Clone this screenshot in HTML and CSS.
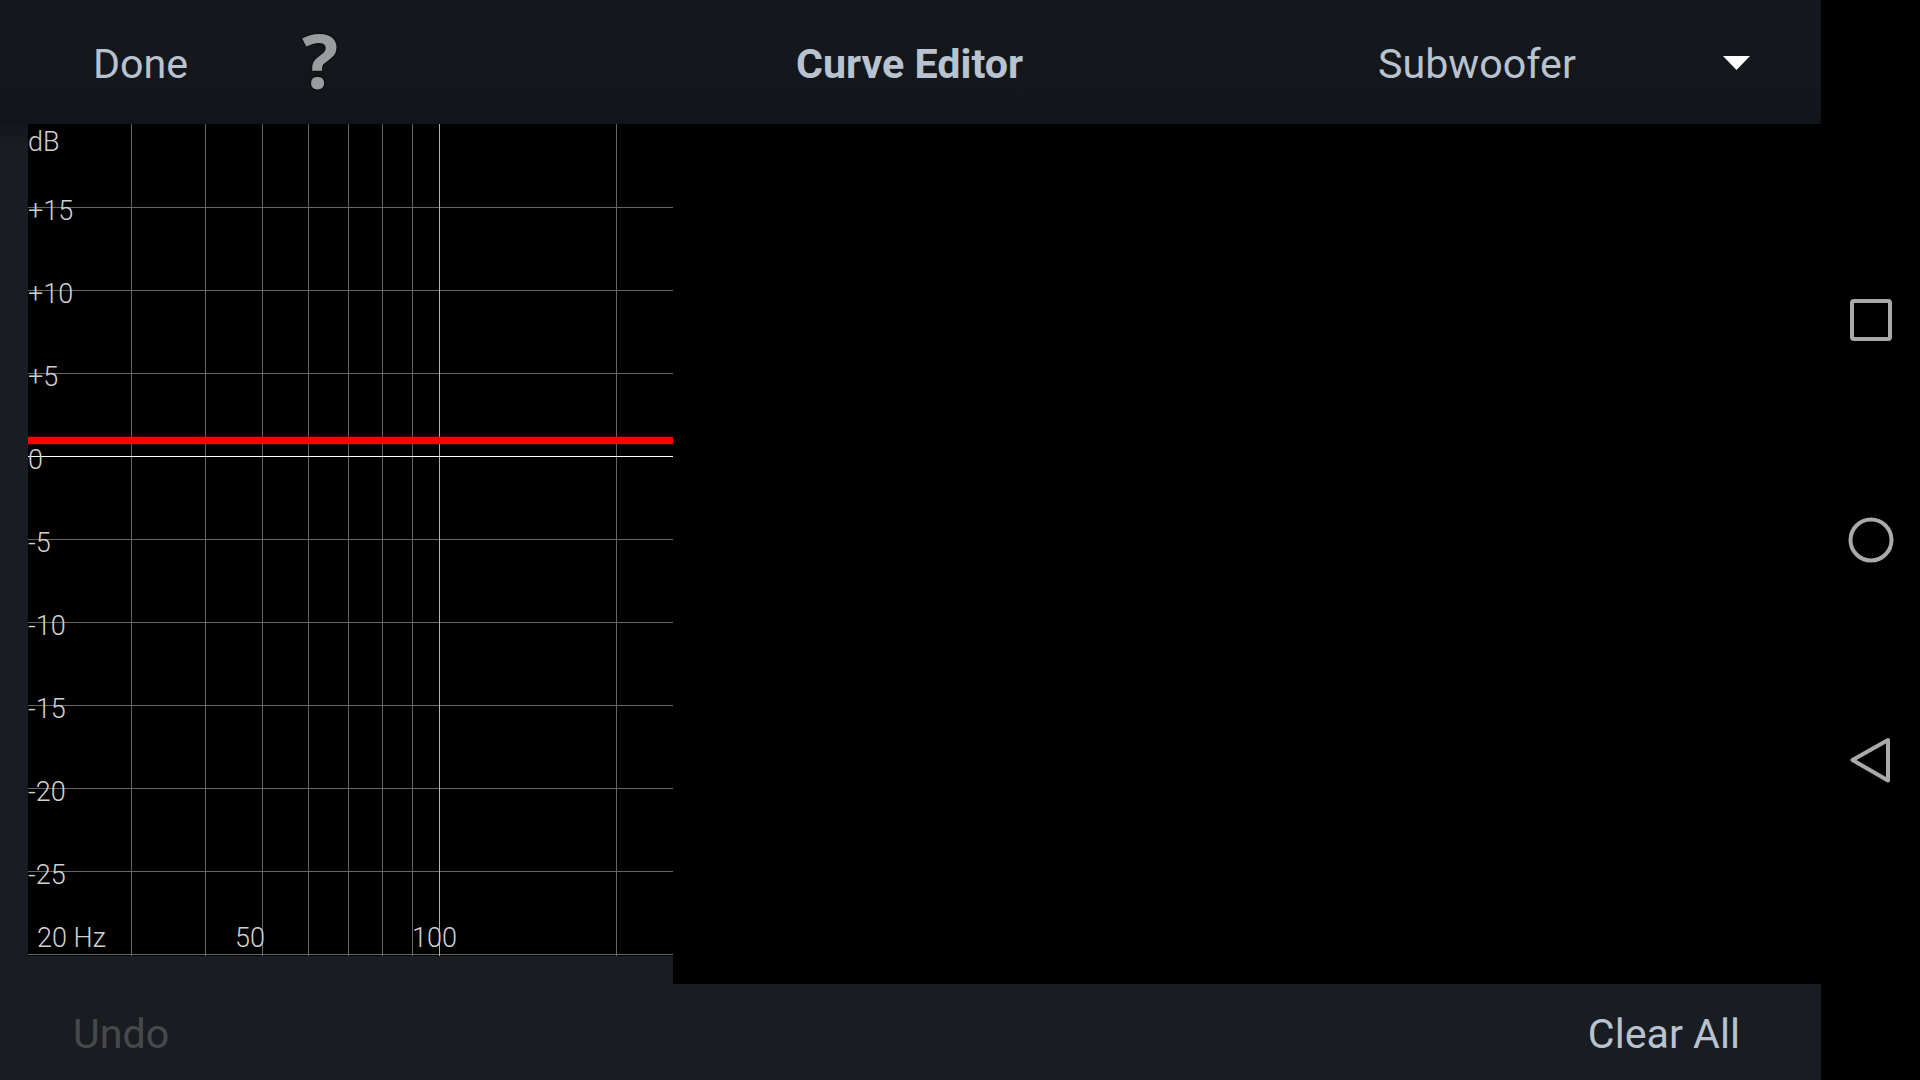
FILE: index.html
```html
<!DOCTYPE html>
<html lang="en">
<head>
<meta charset="utf-8">
<title>Curve Editor</title>
<link rel="stylesheet" href="styles.css">
</head>
<body>
<div class="screen">
  <main class="app">
    <header class="topbar">
      <span class="done">Done</span>
      <span class="help">?</span>
      <span class="title">Curve Editor</span>
      <span class="channel">Subwoofer</span>
      <svg class="caret" width="27" height="14" viewBox="0 0 27 14"><polygon points="0,0 27,0 13.5,14"/></svg>
    </header>
    <section class="middle">
      <div class="chart-col">
        <svg class="chart" width="645" height="832" viewBox="0 0 645 832">
          <g class="grid">
            <line x1="0" x2="645" y1="83.5" y2="83.5"/>
            <line x1="0" x2="645" y1="166.5" y2="166.5"/>
            <line x1="0" x2="645" y1="249.5" y2="249.5"/>
            <line x1="0" x2="645" y1="415.5" y2="415.5"/>
            <line x1="0" x2="645" y1="498.5" y2="498.5"/>
            <line x1="0" x2="645" y1="581.5" y2="581.5"/>
            <line x1="0" x2="645" y1="664.5" y2="664.5"/>
            <line x1="0" x2="645" y1="747.5" y2="747.5"/>
            <line x1="0" x2="645" y1="830.5" y2="830.5"/>
            <line x1="103.5" x2="103.5" y1="0" y2="832"/>
            <line x1="177.5" x2="177.5" y1="0" y2="832"/>
            <line x1="234.5" x2="234.5" y1="0" y2="832"/>
            <line x1="280.5" x2="280.5" y1="0" y2="832"/>
            <line x1="320.5" x2="320.5" y1="0" y2="832"/>
            <line x1="354.5" x2="354.5" y1="0" y2="832"/>
            <line x1="384.5" x2="384.5" y1="0" y2="832"/>
            <line x1="588.5" x2="588.5" y1="0" y2="832"/>
          </g>
          <line class="major" x1="411.5" x2="411.5" y1="0" y2="832"/>
          <line class="zero" x1="0" x2="645" y1="332.5" y2="332.5"/>
          <rect class="curve" x="0" y="312.75" width="645" height="7.5"/>
          <g class="labels">
            <text x="0" y="27">dB</text>
            <text x="0" y="96">+15</text>
            <text x="0" y="179">+10</text>
            <text x="0" y="262">+5</text>
            <text x="0" y="345">0</text>
            <text x="0" y="428">-5</text>
            <text x="0" y="511">-10</text>
            <text x="0" y="594">-15</text>
            <text x="0" y="677">-20</text>
            <text x="0" y="760">-25</text>
            <text x="9" y="823">20 Hz</text>
            <text x="207" y="823">50</text>
            <text x="384" y="823">100</text>
          </g>
        </svg>
      </div>
      <div class="empty"></div>
    </section>
    <footer class="bottombar">
      <span class="undo">Undo</span>
      <span class="clear">Clear All</span>
    </footer>
  </main>
  <nav class="navbar">
    <svg class="nav-icon" width="48" height="48" viewBox="0 0 48 48"><rect x="5" y="5" width="38" height="38" rx="2"/></svg>
    <svg class="nav-icon" width="48" height="48" viewBox="0 0 48 48"><circle cx="24" cy="24" r="20.5"/></svg>
    <svg class="nav-icon" width="48" height="48" viewBox="0 0 48 48"><path d="M41 4 L5.5 24 L41 44.5 Z"/></svg>
  </nav>
</div>
</body>
</html>
```

FILE: styles.css
```css
* { box-sizing: border-box; }
html, body { margin: 0; padding: 0; background: #000; }
body { font-family: Roboto, "Liberation Sans", sans-serif; }

.screen { display: flex; width: 1920px; height: 1080px; overflow: hidden; }
.app { display: flex; flex-direction: column; width: 1821px; }

.topbar {
  display: flex;
  align-items: center;
  height: 124px;
  flex: none;
  padding: 4px 0 0 93px;
  background: linear-gradient(#15191e, #13171c 85%, #11151a);
  font-size: 41.2px;
  color: #b9c3cf;
}
.done { width: 209px; }
.help {
  width: 494px;
  margin-top: -9px;
  font-family: "Open Sans", sans-serif;
  font-weight: 700;
  font-size: 76px;
  line-height: 80px;
  color: #9b9c9e;
  text-shadow: 0 0 3px #000;
}
.title { width: 582px; font-weight: 700; }
.channel { width: 345px; }
.caret { flex: none; margin-top: -2px; fill: #fff; }

.middle { display: flex; flex: 1; min-height: 0; }
.chart-col {
  width: 673px;
  padding-left: 28px;
  background: linear-gradient(#13171b, #191d22 24px);
}
.chart { display: block; background: #000; }
.empty { flex: 1; background: #000; }

.grid line { stroke: #666; stroke-width: 1; shape-rendering: crispEdges; }
.major { stroke: #b0b0b0; stroke-width: 1; shape-rendering: crispEdges; }
.zero { stroke: #fff; stroke-width: 1; shape-rendering: crispEdges; }
.curve { fill: #f00; }
.labels text {
  font-family: Roboto, sans-serif;
  font-weight: 300;
  font-size: 27px;
  fill: #d0d0d0;
}

.bottombar {
  display: flex;
  align-items: center;
  justify-content: space-between;
  height: 96px;
  flex: none;
  padding: 3px 81px 0 73px;
  background: #191d22;
  font-size: 41.2px;
}
.undo { color: #47494c; }
.clear { color: #b9c3cf; }

.navbar {
  display: flex;
  flex-direction: column;
  align-items: center;
  justify-content: center;
  gap: 172px;
  width: 99px;
  padding-left: 1px;
  background: #000;
}
.nav-icon { fill: none; stroke: #aaa; stroke-width: 4; stroke-linejoin: round; }
```
